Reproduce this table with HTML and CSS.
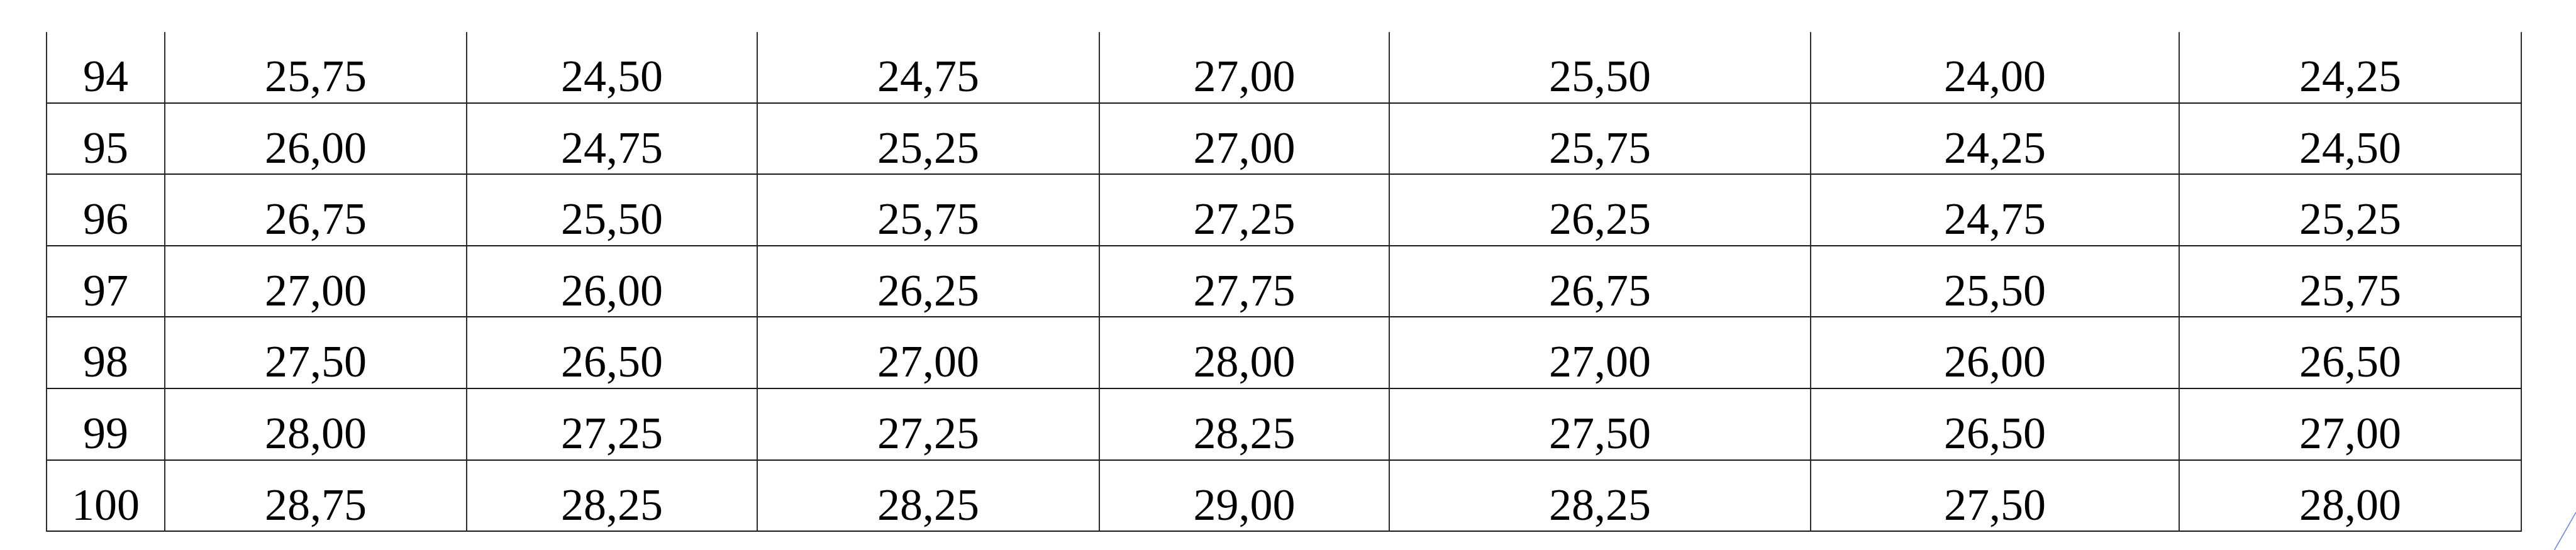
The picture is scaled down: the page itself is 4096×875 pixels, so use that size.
FILE: index.html
```html
<!DOCTYPE html>
<html lang="vi">
<head>
<meta charset="utf-8">
<title>Bảng số liệu</title>
<link rel="stylesheet" href="styles.css">
</head>
<body>
<div class="page">
  <div class="grid">
    <div class="cell">94</div><div class="cell">25,75</div><div class="cell">24,50</div><div class="cell">24,75</div><div class="cell">27,00</div><div class="cell">25,50</div><div class="cell">24,00</div><div class="cell">24,25</div>
    <div class="cell">95</div><div class="cell">26,00</div><div class="cell">24,75</div><div class="cell">25,25</div><div class="cell">27,00</div><div class="cell">25,75</div><div class="cell">24,25</div><div class="cell">24,50</div>
    <div class="cell">96</div><div class="cell">26,75</div><div class="cell">25,50</div><div class="cell">25,75</div><div class="cell">27,25</div><div class="cell">26,25</div><div class="cell">24,75</div><div class="cell">25,25</div>
    <div class="cell">97</div><div class="cell">27,00</div><div class="cell">26,00</div><div class="cell">26,25</div><div class="cell">27,75</div><div class="cell">26,75</div><div class="cell">25,50</div><div class="cell">25,75</div>
    <div class="cell">98</div><div class="cell">27,50</div><div class="cell">26,50</div><div class="cell">27,00</div><div class="cell">28,00</div><div class="cell">27,00</div><div class="cell">26,00</div><div class="cell">26,50</div>
    <div class="cell">99</div><div class="cell">28,00</div><div class="cell">27,25</div><div class="cell">27,25</div><div class="cell">28,25</div><div class="cell">27,50</div><div class="cell">26,50</div><div class="cell">27,00</div>
    <div class="cell">100</div><div class="cell">28,75</div><div class="cell">28,25</div><div class="cell">28,25</div><div class="cell">29,00</div><div class="cell">28,25</div><div class="cell">27,50</div><div class="cell">28,00</div>
  </div>
  <svg class="slash" width="40" height="60" viewBox="0 0 40 60" aria-hidden="true">
    <line x1="40" y1="0" x2="5.7" y2="60" />
  </svg>
</div>
</body>
</html>
```

FILE: styles.css
```css
html, body {
  margin: 0;
  padding: 0;
  background: #ffffff;
}

.page {
  position: relative;
  width: 4096px;
  height: 875px;
  overflow: hidden;
  padding-top: 51px;
  box-sizing: border-box;
}

.grid {
  margin-left: 73px;
  display: grid;
  grid-template-columns: 188px 480px 462px 544px 461px 670px 586px 544px;
  grid-auto-rows: 113.6px;
  width: max-content;
  border-left: 2px solid #2c2c2c;
}

.cell {
  box-sizing: border-box;
  border-right: 2px solid #2c2c2c;
  border-bottom: 2px solid #1a1a1a;
  font-family: "Liberation Serif", "Times New Roman", serif;
  font-size: 72px;
  line-height: 72px;
  color: #000000;
  text-align: center;
  padding-top: 34px;
  white-space: nowrap;
}

.slash {
  position: absolute;
  right: 0;
  bottom: 0;
}

.slash line {
  stroke: #7389d0;
  stroke-width: 1.6;
}
```
